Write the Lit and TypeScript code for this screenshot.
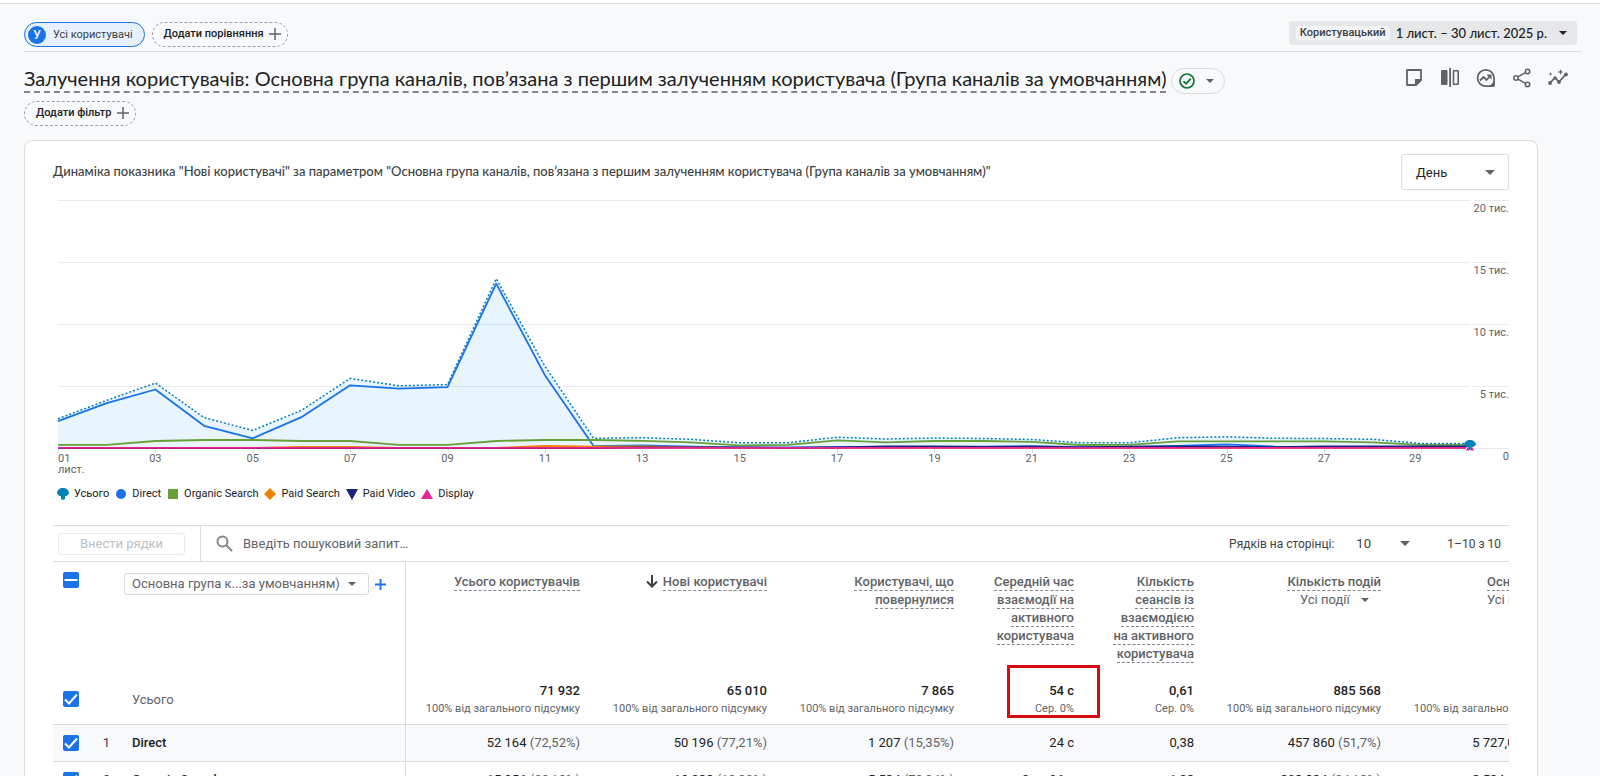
import { LitElement, html, svg, css, nothing } from "lit";
import { customElement, state } from "lit/decorators.js";
import { classMap } from "lit/directives/class-map.js";

interface Series {
  name: string;
  color: string;
  shape: "fan" | "circle" | "square" | "diamond" | "down" | "up";
  values: number[];
}

const SERIES: Series[] = [
  {
    name: "Усього", color: "#0480b8", shape: "fan",
    values: [2350, 3820, 5220, 2430, 1410, 3020, 5590, 5000, 5090, 13600, 6570, 780, 830, 700, 420, 420, 870, 720, 800, 760, 680, 420, 420, 830, 900, 780, 760, 700, 360, 360],
  },
  {
    name: "Direct", color: "#1a73e8", shape: "circle",
    values: [2150, 3600, 4700, 1780, 780, 2470, 5040, 4760, 4880, 13200, 5850, 150, 200, 110, 60, 60, 80, 90, 90, 110, 130, 90, 90, 160, 300, 110, 60, 60, 60, 60],
  },
  {
    name: "Organic Search", color: "#689f38", shape: "square",
    values: [260, 260, 560, 640, 640, 560, 560, 260, 260, 560, 640, 640, 580, 460, 220, 260, 620, 460, 560, 560, 500, 240, 260, 540, 540, 540, 540, 460, 260, 260],
  },
  {
    name: "Paid Search", color: "#ef8200", shape: "diamond",
    values: [0, 0, 0, 0, 0, 90, 90, 0, 0, 0, 170, 110, 130, 60, 20, 20, 20, 20, 20, 20, 20, 20, 20, 20, 20, 20, 20, 20, 20, 20],
  },
  {
    name: "Paid Video", color: "#1a237e", shape: "down",
    values: [0, 0, 0, 0, 0, 0, 0, 0, 0, 0, 0, 0, 40, 50, 50, 20, 40, 130, 130, 90, 130, 60, 110, 120, 110, 70, 130, 130, 130, 130],
  },
  {
    name: "Display", color: "#e52592", shape: "up",
    values: Array(30).fill(20),
  },
];

const AXIS = ["0", "5 тис.", "10 тис.", "15 тис.", "20 тис."];

function marker(shape: Series["shape"], color: string) {
  switch (shape) {
    case "fan": return svg`<path fill=${color} d="M0 5.500C0 2 2.600 0 6 0s6 2 6 5.500L9.500 8H8v3l-2 1-2-1V8H2.500z"/>`;
    case "circle": return svg`<circle fill=${color} cx="6" cy="6" r="5"/>`;
    case "square": return svg`<path fill=${color} d="M1 1h10v10H1z"/>`;
    case "diamond": return svg`<path fill=${color} d="M6 0l6 6-6 6-6-6z"/>`;
    case "down": return svg`<path fill=${color} d="M0 1h12L6 12z"/>`;
    default: return svg`<path fill=${color} d="M0 11h12L6 1z"/>`;
  }
}

@customElement("trend-chart")
class TrendChart extends LitElement {
  @state() private width = 1456;
  private observer?: ResizeObserver;

  static styles = css`
    :host { display: block; }
    .plot { display: block; width: 100%; height: 290px; }
    .tick { font: 11px Roboto, sans-serif; fill: #5f6368; }
    .legend { display: flex; gap: 6px; margin: 6px 0 23px 4px; padding: 0; list-style: none; }
    .item { display: flex; align-items: center; gap: 5px; font-size: 11px; line-height: 16px; color: #202124; }
    .mark { display: block; width: 12px; height: 12px; }
  `;

  connectedCallback() {
    super.connectedCallback();
    this.observer = new ResizeObserver(([entry]) => { this.width = Math.round(entry.contentRect.width); });
    this.observer.observe(this);
  }

  disconnectedCallback() {
    this.observer?.disconnect();
    super.disconnectedCallback();
  }

  render() {
    const left = 5;
    const right = this.width - 39;
    const base = 258;
    const unit = 249 / 20000;
    const x = (i: number) => left + ((right - left) * i) / 29;
    const points = (s: Series) => s.values.map((v, i) => `${x(i).toFixed(1)},${(base - v * unit).toFixed(1)}`).join(" ");
    const total = SERIES[0];
    const endY = base - 3;
    return html`
      <svg class="plot" role="img" aria-label="Динаміка нових користувачів">
        ${AXIS.map((label, i) => {
          const y = Math.ceil(base - i * 5000 * unit) + 0.5;
          return svg`
            <path d="M${left} ${y}H${right}M${right + 3} ${y}H${this.width}" stroke="#e8eaed" stroke-width="1"/>
            <text class="tick" x=${this.width} y=${y + 11} text-anchor="end">${label}</text>`;
        })}
        <polygon points="${points(total)} ${right},${base} ${left},${base}" fill="#2196f3" fill-opacity="0.1"/>
        ${Array.from({ length: 15 }, (_, i) => {
          const px = x(i * 2);
          const day = String(i * 2 + 1).padStart(2, "0");
          return svg`
            <path d="M${Math.round(px) + 0.5} ${base}v5" stroke="#dadce0"/>
            <text class="tick" x=${i === 0 ? left : i === 14 ? px - 6 : px} y="272" text-anchor=${i === 0 ? "start" : "middle"}>${day}</text>`;
        })}
        <text class="tick" x=${left} y="283">лист.</text>
        ${SERIES.slice(1).map((s) => svg`<polyline points=${points(s)} fill="none" stroke=${s.color} stroke-width="1.800" stroke-linejoin="round"/>`)}
        <polyline points=${points(total)} fill="none" stroke=${total.color} stroke-width="1.500" stroke-dasharray="2 2"/>
        <path d="M${right - 5} ${endY + 6}l3 -5 3 5zM${right - 1} ${endY + 6}l3 -5 3 5z" fill="#e52592" stroke="#fff" stroke-width="1"/>
        <path d="M${right - 6} ${endY}c0 -3 3 -5 6 -5s6 2 6 5l-3 2h-1l-2 4 -2 -4h-1z" fill=${total.color}/>
      </svg>
      <ul class="legend">
        ${SERIES.map((s) => html`<li class="item"><svg class="mark" viewBox="0 0 12 12" aria-hidden="true">${marker(s.shape, s.color)}</svg>${s.name}</li>`)}
      </ul>`;
  }
}

interface Metric {
  title: string[];
  narrow?: boolean;
  sorted?: boolean;
  filter?: boolean;
  marked?: boolean;
  total: string;
  share: string;
}

const FULL = "100% від загального підсумку";
const METRICS: Metric[] = [
  { title: ["Усього користувачів"], total: "71 932", share: FULL },
  { title: ["Нові користувачі"], sorted: true, total: "65 010", share: FULL },
  { title: ["Користувачі, що", "повернулися"], total: "7 865", share: FULL },
  { title: ["Середній час", "взаємодії на", "активного", "користувача"], narrow: true, marked: true, total: "54 с", share: "Сер. 0%" },
  { title: ["Кількість", "сеансів із", "взаємодією", "на активного", "користувача"], narrow: true, total: "0,61", share: "Сер. 0%" },
  { title: ["Кількість подій"], filter: true, total: "885 568", share: FULL },
  { title: ["Основні події"], filter: true, total: "9 266,00", share: FULL },
];

const ROWS: { name: string; cells: [string, string?][] }[] = [
  { name: "Direct", cells: [["52 164", "72,52%"], ["50 196", "77,21%"], ["1 207", "15,35%"], ["24 с"], ["0,38"], ["457 860", "51,7%"], ["5 727,00", "61,8%"]] },
  { name: "Organic Search", cells: [["15 956", "22,18%"], ["12 938", "19,90%"], ["5 534", "70,34%"], ["2 хв 06 с"], ["1,08"], ["303 334", "34,18%"], ["3 534,00", "38,1%"]] },
];

@customElement("app-root")
class AppRoot extends LitElement {
  static styles = css`
    :host { display: block; height: 100vh; overflow: hidden; box-sizing: border-box; border-top: 3px solid #fff; background: #f8f9fa; color: #202124; font-family: Roboto, sans-serif; font-size: 13px; }
    * { box-sizing: border-box; }
    button, select, input { font: inherit; color: inherit; margin: 0; }
    button { cursor: pointer; }
    svg { display: block; fill: currentColor; }
    .page { border-top: 1px solid #dadce0; padding: 18px 19px 0 24px; }
    .bar { display: flex; align-items: flex-start; gap: 7px; height: 30px; border-bottom: 1px solid #dadce0; }
    .chip { display: flex; align-items: center; height: 25px; border-radius: 13px; font-size: 11px; line-height: 16px; background: none; white-space: nowrap; }
    .all { gap: 7px; padding: 0 11px 0 3px; border: 1px solid #1a73e8; background: #e8f0fe; color: #3c4043; }
    .avatar { width: 18px; height: 18px; border-radius: 50%; background: #1a73e8; color: #fff; font-weight: 500; font-size: 12px; line-height: 18px; text-align: center; }
    .add { gap: 5px; padding: 0 6px 2px 11px; border: 1px dashed #9aa0a6; font-weight: 500; }
    .add svg { color: #5f6368; }
    .date { display: flex; align-items: center; gap: 6px; height: 24px; margin: -1px 4px 0 auto; padding: 0 10px 0 7px; border: 0; border-radius: 3px; background: #e6e7e8; font: 500 13px Lato, sans-serif; }
    .tag { padding: 0 4px; border-radius: 2px; background: #f1f3f4; color: #3c4043; font: 500 11px/14px Roboto, sans-serif; }
    .date svg { margin-left: 6px; }
    .heading { display: flex; align-items: flex-start; gap: 5px; margin: 16px 0 7px; }
    .title { margin: 0; padding-bottom: 2px; border-bottom: 2px dashed #80868b; font: 400 20px/21px Lato, sans-serif; white-space: nowrap; }
    .status { display: flex; align-items: center; justify-content: space-between; width: 54px; height: 26px; padding: 0 10px 0 7px; border: 1px solid #dadce0; border-radius: 13px; background: none; color: #5f6368; }
    .actions { display: flex; gap: 16px; margin: 0 13px 0 auto; color: #5f6368; }
    .tool { width: 20px; height: 20px; padding: 0; border: 0; background: none; }
    .card { margin: 14px 43px 0 0; padding: 13px 28px 0; border: 1px solid #dadce0; border-radius: 8px 8px 0 0; background: #fff; }
    .cardhead { display: flex; align-items: center; justify-content: space-between; height: 36px; }
    .subtitle { margin: 0; padding-bottom: 2px; color: #3c4043; font: 500 13px/20px Lato, sans-serif; }
    select { appearance: none; border: 0; outline: 0; background: url('data:image/svg+xml,<svg xmlns="http://www.w3.org/2000/svg" width="10" height="5"><path d="M0 0h10L5 5z" fill="%235f6368"/></svg>') no-repeat; }
    .period { width: 108px; height: 36px; padding: 0 14px; border: 1px solid #dadce0; border-radius: 3px; background-position: right 13px center; }
    .toolbar { display: flex; align-items: center; height: 37px; border: solid #dadce0; border-width: 1px 0; color: #5f6368; }
    .plot { width: 127px; height: 22px; margin: 0 15px 0 5px; padding: 0; border: 1px solid #e8eaed; border-radius: 3px; background: none; color: #bdc1c6; }
    .search { display: flex; flex: 1; align-items: center; gap: 10px; height: 35px; padding-left: 15px; border-left: 1px solid #dadce0; }
    .query { flex: 1; min-width: 0; padding: 0; border: 0; outline: 0; background: none; }
    .query::placeholder { color: #5f6368; opacity: 1; }
    .pager { display: flex; align-items: center; color: #3c4043; font-size: 12px; }
    .size { width: 64px; height: 24px; margin: 0 33px 0 16px; padding: 0 6px; font-size: 13px; background-position: right 4px center; }
    .range { margin-right: 8px; }
    .scroller { overflow: hidden; }
    table { width: 1528px; min-width: 100%; table-layout: fixed; border-spacing: 0; }
    th, td { padding: 0; text-align: right; font-weight: 400; white-space: nowrap; }
    .c-check { width: 36px; }
    .c-index { width: 35px; }
    .c-dim { width: 282px; }
    .c-wide { width: 187px; }
    .c-narrow { width: 120px; }
    .check { padding-left: 10px; text-align: left; }
    .index { text-align: center; color: #3c4043; }
    .dim { border-right: 1px solid #dadce0; padding-left: 8px; text-align: left; }
    .metric { padding-right: 13px; }
    .head { height: 112px; color: #5f6368; }
    .head th { vertical-align: top; padding-top: 11px; line-height: 18px; }
    .head .check { padding-top: 10px; }
    .head .dim { padding-left: 0; }
    .pick { display: flex; align-items: center; gap: 6px; }
    .dimension { width: 245px; height: 22px; padding: 0 7px; border: 1px solid #dadce0; border-radius: 3px; background-position: right 12px center; background-size: 8px 4px; }
    .plus { padding: 0; border: 0; background: none; color: #1a73e8; }
    .sort { display: inline-block; margin-right: 5px; vertical-align: -2px; color: #3c4043; }
    .name { padding-bottom: 1px; border-bottom: 1px dashed #80868b; font-weight: 500; }
    .events { width: 81px; height: 18px; padding: 0; background-position: right 12px center; background-size: 8px 4px; }
    .totals { height: 51px; }
    .totals td, .totals th, .row td, .row th { border-bottom: 1px solid #dadce0; }
    .totals .dim { color: #5f6368; }
    .totals .metric { position: relative; padding-bottom: 6px; vertical-align: bottom; line-height: 18px; }
    .sum { display: block; font-weight: 500; }
    .share { display: block; font-size: 11px; color: #5f6368; }
    .callout { position: absolute; right: -13px; bottom: 6px; width: 93px; height: 53px; border: 3px solid #d90b0f; pointer-events: none; }
    .row { height: 37px; }
    .row .dim { font-weight: 500; }
    .row .dim, .row .index, .row .metric { padding-bottom: 1px; }
    .selected { background: #f8f9fa; }
    .pct { color: #5f6368; }
    input[type="checkbox"] { display: block; appearance: none; width: 16px; height: 16px; border-radius: 2px; background: #1a73e8 url('data:image/svg+xml,<svg xmlns="http://www.w3.org/2000/svg" viewBox="0 0 16 16"><path d="M2 8.500l4 4 8-9" fill="none" stroke="white" stroke-width="2"/></svg>'); }
    input.mixed { background-image: url('data:image/svg+xml,<svg xmlns="http://www.w3.org/2000/svg" viewBox="0 0 16 16"><path d="M1.500 8h13" stroke="white" stroke-width="2"/></svg>'); }
  `;

  private caret(w = 8) {
    return html`<svg width=${w} height="4" viewBox="0 0 8 4" aria-hidden="true"><path d="M0 0h8L4 4z"/></svg>`;
  }

  private cross(size: number, weight: number) {
    return html`<svg width=${size} height=${size} viewBox="0 0 12 12" aria-hidden="true"><path d="M6 0v12M0 6h12" fill="none" stroke="currentColor" stroke-width=${weight}/></svg>`;
  }

  private tools() {
    const icons: [string, unknown][] = [
      ["Примітки", svg`<path fill="none" stroke="currentColor" stroke-width="1.800" stroke-linejoin="round" d="M3 2h14v10l-5 5H3z"/><path d="M11 11h7l-7 7z"/>`],
      ["Порівняння", svg`<rect x="1" y="2" width="6.500" height="15" rx="1"/><path d="M9.200 0H11v19H9.200z"/><rect x="13.500" y="2.800" width="4.700" height="13.400" rx=".5" fill="none" stroke="currentColor" stroke-width="1.600"/>`],
      ["Статистика", svg`<path fill="none" stroke="currentColor" stroke-width="1.800" d="M18 17.500V10a8.200 8.200 0 1 0-8.200 8.200H18"/><path fill="none" stroke="currentColor" stroke-width="1.800" d="M4 12.500l3.500-3.500 3 3L14 8.200"/><path d="M10.500 6.500H15.500v5zM18.500 13v6h-6z"/>`],
      ["Поділитися", svg`<g fill="none" stroke="currentColor" stroke-width="1.600"><circle cx="15.500" cy="3.500" r="2.200"/><circle cx="4" cy="10" r="2.200"/><circle cx="15.500" cy="16.500" r="2.200"/><path d="M13.600 4.600L5.900 8.900M5.900 11.100l7.700 4.300"/></g>`],
      ["Аналіз", svg`<path fill="none" stroke="currentColor" stroke-width="1.800" d="M2 15l5-5.500 4 4.500 7-8"/><circle cx="2" cy="15" r="1.900"/><circle cx="7" cy="10" r="1.700"/><circle cx="11" cy="14" r="1.900"/><circle cx="18" cy="6.500" r="1.900"/><path d="M12.500 1l.8 2.200 2.200.8-2.200.8-.8 2.200-.8-2.200L9.500 4l2.200-.8zM2.500 4l.5 1.500 1.500.5-1.500.5L2.500 8 2 6.500.5 6 2 5.500z"/>`],
    ];
    return icons.map(([label, shape]) => html`<button class="tool" aria-label=${label}><svg width="20" height="20" viewBox="0 0 20 20">${shape}</svg></button>`);
  }

  private headCell(m: Metric) {
    return html`<th class="metric" scope="col">
      ${m.sorted ? html`<svg class="sort" width="12" height="13" viewBox="0 0 12 13" aria-hidden="true"><path fill="none" stroke="currentColor" stroke-width="2" d="M6 0v11M1 6.500l5 5 5-5"/></svg>` : nothing}${m.title.map((line, i) => html`${i ? html`<br>` : nothing}<span class="name">${line}</span>`)}
      ${m.filter ? html`<br><select class="events" aria-label="Подія"><option>Усі події</option></select>` : nothing}
    </th>`;
  }

  render() {
    return html`
      <main class="page">
        <div class="bar">
          <button class="chip all"><span class="avatar">У</span>Усі користувачі</button>
          <button class="chip add">Додати порівняння ${this.cross(12, 1.5)}</button>
          <button class="date"><span class="tag">Користувацький</span>1 лист. – 30 лист. 2025 р.${this.caret()}</button>
        </div>
        <div class="heading">
          <h1 class="title">Залучення користувачів: Основна група каналів, пов’язана з першим залученням користувача (Група каналів за умовчанням)</h1>
          <button class="status" aria-label="Стан даних">
            <svg width="16" height="16" viewBox="0 0 16 16"><g fill="none" stroke="#137333" stroke-width="1.700"><circle cx="8" cy="8" r="7"/><path d="M4.500 8.200l2.500 2.500 4.800-5"/></g></svg>
            ${this.caret()}
          </button>
          <div class="actions">${this.tools()}</div>
        </div>
        <button class="chip add">Додати фільтр ${this.cross(12, 1.5)}</button>
        <section class="card">
          <div class="cardhead">
            <h2 class="subtitle">Динаміка показника "Нові користувачі" за параметром "Основна група каналів, пов’язана з першим залученням користувача (Група каналів за умовчанням)"</h2>
            <select class="period" aria-label="Період"><option>День</option></select>
          </div>
          <trend-chart></trend-chart>
          <div class="toolbar">
            <button class="plot" disabled>Внести рядки</button>
            <label class="search">
              <svg width="17" height="17" viewBox="0 0 17 17" aria-hidden="true"><g fill="none" stroke="#80868b" stroke-width="2"><circle cx="6.500" cy="6.500" r="5"/><path d="M10 10l6 6"/></g></svg>
              <input class="query" type="text" placeholder="Введіть пошуковий запит…" aria-label="Пошук">
            </label>
            <div class="pager">
              <label for="size">Рядків на сторінці:</label>
              <select class="size" id="size"><option>10</option></select>
              <span class="range">1–10 з 10</span>
            </div>
          </div>
          <div class="scroller">
            <table>
              <colgroup>
                <col class="c-check"><col class="c-index"><col class="c-dim">
                ${METRICS.map((m) => html`<col class=${m.narrow ? "c-narrow" : "c-wide"}>`)}
              </colgroup>
              <thead>
                <tr class="head">
                  <th class="check"><input class="mixed" type="checkbox" aria-label="Вибрати всі"></th>
                  <th></th>
                  <th class="dim" scope="col">
                    <div class="pick">
                      <select class="dimension" aria-label="Параметр"><option>Основна група к...за умовчанням)</option></select>
                      <button class="plus" aria-label="Додати параметр">${this.cross(11, 2)}</button>
                    </div>
                  </th>
                  ${METRICS.map((m) => this.headCell(m))}
                </tr>
              </thead>
              <tbody>
                <tr class="totals">
                  <td class="check"><input type="checkbox" checked aria-label="Усього"></td>
                  <td></td>
                  <th class="dim" scope="row">Усього</th>
                  ${METRICS.map((m) => html`<td class="metric"><span class="sum">${m.total}</span><span class="share">${m.share}</span>${m.marked ? html`<div class="callout"></div>` : nothing}</td>`)}
                </tr>
                ${ROWS.map((r, i) => html`<tr class=${classMap({ row: true, selected: i === 0 })}>
                  <td class="check"><input type="checkbox" checked aria-label=${r.name}></td>
                  <td class="index">${i + 1}</td>
                  <th class="dim" scope="row">${r.name}</th>
                  ${r.cells.map(([value, pct]) => html`<td class="metric">${value}${pct ? html` <span class="pct">(${pct})</span>` : nothing}</td>`)}
                </tr>`)}
              </tbody>
            </table>
          </div>
        </section>
      </main>`;
  }
}
